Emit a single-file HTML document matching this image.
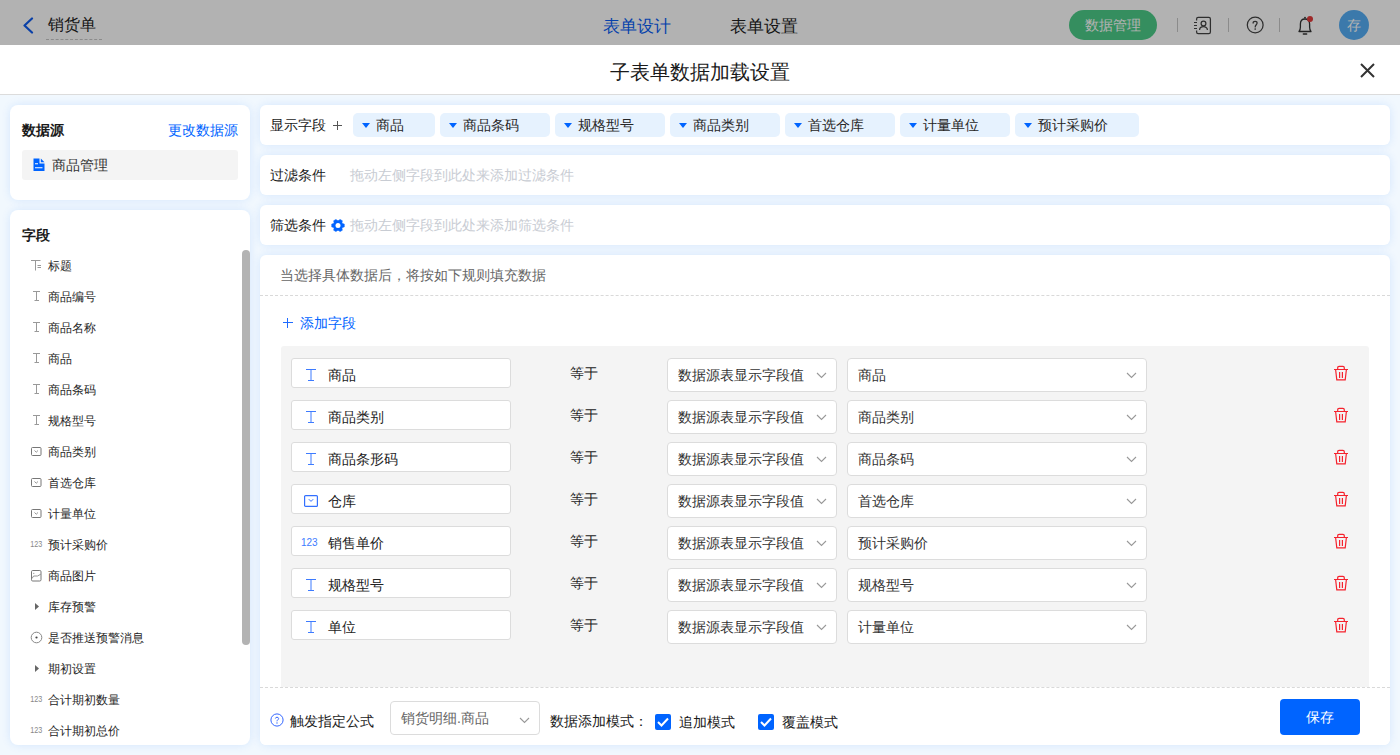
<!DOCTYPE html>
<html><head><meta charset="utf-8">
<style>
*{box-sizing:border-box;margin:0;padding:0}
html,body{width:1400px;height:755px;overflow:hidden;background:#fff;font-family:"Liberation Sans",sans-serif;color:#333}
.abs{position:absolute}
.t{position:absolute;white-space:nowrap;line-height:1}
/* header */
#hdr{position:absolute;left:0;top:0;width:1400px;height:45px;background:#fff}
#ovl{position:absolute;left:0;top:0;width:1400px;height:45px;background:rgba(0,0,0,0.3)}
/* modal */
#mh{position:absolute;left:0;top:45px;width:1400px;height:50px;background:#fff;border-bottom:1px solid #dcdcdc}
#mb{position:absolute;left:0;top:95px;width:1400px;height:660px;background:#f1f8fe}
.card{position:absolute;background:#fff;border-radius:8px;box-shadow:0 0 10px rgba(0,110,245,0.12)}
.chip{position:absolute;top:8px;height:24px;background:#e6f2fe;border-radius:5px;font-size:14px}
.chip .tri{position:absolute;left:9px;top:10px;width:0;height:0;border-left:4px solid transparent;border-right:4px solid transparent;border-top:5px solid #0064ff}
.chip span{position:absolute;left:23px;top:5px;line-height:14px;color:#262626}
.fi{position:absolute;left:28px;height:31px;width:200px;font-size:12px;color:#262626}
.fi span{position:absolute;left:10px;top:9px;line-height:12px}
.fi svg{position:absolute;left:-8px;top:8px}
.row{position:absolute;left:10px;width:1068px;height:42px}
.inp{position:absolute;left:0;top:0;width:220px;height:30px;background:#fff;border:1px solid #dcdcdc;border-radius:3px;font-size:14px}
.inp span{position:absolute;left:36px;top:9px;line-height:14px;color:#222}
.inp svg{position:absolute;left:11px;top:8px}
.eq{position:absolute;left:279px;top:8px;font-size:14px;line-height:14px;color:#222}
.sel{position:absolute;top:0;height:34px;background:#fff;border:1px solid #dcdcdc;border-radius:4px;font-size:14px}
.sel span{position:absolute;left:10px;top:9px;line-height:14px;color:#333}
.sel svg{position:absolute;top:13px}
.trash{position:absolute;left:1042px;top:7px}
</style></head><body>
<div id="hdr">
  <svg class="abs" style="left:22px;top:17px" width="12" height="17" viewBox="0 0 12 17"><path d="M10 1.5 L2.5 8.5 L10 15.5" fill="none" stroke="#0f5cf0" stroke-width="2.2" stroke-linecap="round" stroke-linejoin="round"/></svg>
  <div class="t" style="left:48px;top:17px;font-size:16px;color:#222">销货单</div>
  <div class="abs" style="left:46px;top:39px;width:56px;height:0;border-top:1px dashed #c8c8c8"></div>
  <div class="t" style="left:603px;top:18px;font-size:17px;color:#0a5ff5">表单设计</div>
  <div class="t" style="left:730px;top:18px;font-size:17px;color:#222">表单设置</div>
  <div class="abs" style="left:1069px;top:10px;width:88px;height:30px;border-radius:15px;background:#4ccc89"></div>
  <div class="t" style="left:1085px;top:18px;font-size:14px;color:#fff">数据管理</div>
  <div class="abs" style="left:1177px;top:18px;width:1px;height:14px;background:#c8c8c8"></div>
  <svg class="abs" style="left:1193px;top:16px" width="20" height="20" viewBox="0 0 20 20"><path d="M3.6 4.5 V3 Q3.6 1.4 5.2 1.4 H15.8 Q17.4 1.4 17.4 3 V16 Q17.4 17.6 15.8 17.6 H5.2 Q3.6 17.6 3.6 16 V14.5" fill="none" stroke="#444" stroke-width="1.25"/><circle cx="10.5" cy="7.4" r="2.4" fill="none" stroke="#444" stroke-width="1.25"/><path d="M6.6 14 C6.6 9.6 14.4 9.6 14.4 14" fill="none" stroke="#444" stroke-width="1.25"/><path d="M1 6.5h3M1 9.5h3M1 12.5h3" stroke="#444" stroke-width="1.1"/></svg>
  <div class="abs" style="left:1228px;top:18px;width:1px;height:14px;background:#c8c8c8"></div>
  <svg class="abs" style="left:1245px;top:15.4px" width="20" height="20" viewBox="0 0 20 20"><circle cx="10.2" cy="10" r="7.9" fill="none" stroke="#444" stroke-width="1.25"/><path d="M8.1 8.1 C8.1 5.7 12.1 5.7 12.1 8.1 C12.1 9.7 10.2 9.8 10.2 11.9" fill="none" stroke="#444" stroke-width="1.25" stroke-linecap="round"/><circle cx="10.2" cy="14" r="0.85" fill="#444"/></svg>
  <div class="abs" style="left:1279px;top:18px;width:1px;height:14px;background:#c8c8c8"></div>
  <svg class="abs" style="left:1296px;top:15px" width="20" height="21" viewBox="0 0 20 21"><path d="M3 16.5 C4 15.5 4.4 14 4.4 12 V9 C4.4 6 6.3 4 9 4 C11.7 4 13.6 6 13.6 9 V12 C13.6 14 14 15.5 15 16.5 Z" fill="none" stroke="#333" stroke-width="1.3" stroke-linejoin="round"/><path d="M7.3 19 H10.7" stroke="#333" stroke-width="1.3" stroke-linecap="round"/><circle cx="9" cy="2.6" r="0.9" fill="#333"/><circle cx="14" cy="4" r="3" fill="#e23b3b"/></svg>
  <div class="abs" style="left:1339px;top:10px;width:30px;height:30px;border-radius:50%;background:#55aef5"></div>
  <div class="t" style="left:1347px;top:18px;font-size:14px;color:#fff">存</div>
</div>
<div id="ovl"></div>

<div id="mh">
  <div class="t" style="left:610px;top:17px;font-size:20px;color:#1a1a1a">子表单数据加载设置</div>
  <svg class="abs" style="left:1359px;top:17px" width="17" height="17" viewBox="0 0 17 17"><path d="M2 2 L15 15 M15 2 L2 15" stroke="#333" stroke-width="2"/></svg>
</div>

<div id="mb">
  <!-- left top card -->
  <div class="card" style="left:10px;top:10px;width:240px;height:95px">
    <div class="t" style="left:12px;top:18px;font-size:14px;font-weight:bold;color:#1a1a1a">数据源</div>
    <div class="t" style="left:158px;top:18px;font-size:14px;color:#0064ff">更改数据源</div>
    <div class="abs" style="left:12px;top:45px;width:216px;height:30px;background:#f4f4f4;border-radius:3px"></div>
    <svg class="abs" style="left:23px;top:53px" width="12" height="13" viewBox="0 0 12 13"><path d="M0.5 0.5 H6.5 V5.5 H11.5 V13 H0.5 Z" fill="#0064ff"/><path d="M7.8 0.5 L11.5 4.2 H7.8 Z" fill="#0064ff"/><path d="M2 5.7 H5 M2 9.7 H9.5" stroke="#fff" stroke-width="1.1"/></svg>
    <div class="t" style="left:42px;top:53px;font-size:14px;color:#333">商品管理</div>
  </div>
  <!-- left fields card -->
  <div class="card" style="left:10px;top:115px;width:240px;height:535px;overflow:hidden">
    <div class="t" style="left:12px;top:18px;font-size:14px;font-weight:bold;color:#1a1a1a">字段</div>
    <div class="abs" style="left:232px;top:40px;width:8px;height:395px;border-radius:4px;background:#b3b3b3"></div>
  </div>
  <div id="fields" class="abs" style="left:10px;top:156px;width:232px;height:495px;overflow:hidden">
<div class="fi" style="top:0px"><svg width="13" height="13" viewBox="0 0 13 13"><path d="M1 1.5 H10.5 M5.5 1.5 V11.5" stroke="#999" stroke-width="1"/><path d="M7.5 6.5 H11 M7.5 8.5 H11" stroke="#999" stroke-width="1"/></svg><span>标题</span></div>
<div class="fi" style="top:31px"><svg width="13" height="13" viewBox="0 0 13 13"><path d="M3 1.5 H10 M6.5 1.5 V10.5 M4.5 10.5 H9" stroke="#999" stroke-width="1"/></svg><span>商品编号</span></div>
<div class="fi" style="top:62px"><svg width="13" height="13" viewBox="0 0 13 13"><path d="M3 1.5 H10 M6.5 1.5 V10.5 M4.5 10.5 H9" stroke="#999" stroke-width="1"/></svg><span>商品名称</span></div>
<div class="fi" style="top:93px"><svg width="13" height="13" viewBox="0 0 13 13"><path d="M3 1.5 H10 M6.5 1.5 V10.5 M4.5 10.5 H9" stroke="#999" stroke-width="1"/></svg><span>商品</span></div>
<div class="fi" style="top:124px"><svg width="13" height="13" viewBox="0 0 13 13"><path d="M3 1.5 H10 M6.5 1.5 V10.5 M4.5 10.5 H9" stroke="#999" stroke-width="1"/></svg><span>商品条码</span></div>
<div class="fi" style="top:155px"><svg width="13" height="13" viewBox="0 0 13 13"><path d="M3 1.5 H10 M6.5 1.5 V10.5 M4.5 10.5 H9" stroke="#999" stroke-width="1"/></svg><span>规格型号</span></div>
<div class="fi" style="top:186px"><svg width="13" height="13" viewBox="0 0 13 13"><rect x="1.5" y="2.5" width="9.5" height="8" rx="1" fill="none" stroke="#777" stroke-width="1"/><path d="M4.5 5.5 L6.25 7.2 L8 5.5" fill="none" stroke="#888" stroke-width="0.9"/></svg><span>商品类别</span></div>
<div class="fi" style="top:217px"><svg width="13" height="13" viewBox="0 0 13 13"><rect x="1.5" y="2.5" width="9.5" height="8" rx="1" fill="none" stroke="#777" stroke-width="1"/><path d="M4.5 5.5 L6.25 7.2 L8 5.5" fill="none" stroke="#888" stroke-width="0.9"/></svg><span>首选仓库</span></div>
<div class="fi" style="top:248px"><svg width="13" height="13" viewBox="0 0 13 13"><rect x="1.5" y="2.5" width="9.5" height="8" rx="1" fill="none" stroke="#777" stroke-width="1"/><path d="M4.5 5.5 L6.25 7.2 L8 5.5" fill="none" stroke="#888" stroke-width="0.9"/></svg><span>计量单位</span></div>
<div class="fi" style="top:279px"><svg width="15" height="13" viewBox="0 0 15 13"><text x="0.3" y="8.8" font-family="Liberation Sans" font-size="9" textLength="12" lengthAdjust="spacingAndGlyphs" fill="#888">123</text></svg><span>预计采购价</span></div>
<div class="fi" style="top:310px"><svg width="13" height="13" viewBox="0 0 13 13"><rect x="1.5" y="1.5" width="9.5" height="10.5" rx="1.2" fill="none" stroke="#777" stroke-width="1"/><path d="M2 9.5 L3.6 7 H7.5 L10.8 5.2" fill="none" stroke="#888" stroke-width="0.9"/><circle cx="3.8" cy="4.3" r="0.6" fill="#888"/></svg><span>商品图片</span></div>
<div class="fi" style="top:341px"><svg width="13" height="13" viewBox="0 0 13 13"><path d="M5 3 L9 6.5 L5 10 Z" fill="#666"/></svg><span>库存预警</span></div>
<div class="fi" style="top:372px"><svg width="13" height="13" viewBox="0 0 13 13"><circle cx="6.5" cy="6.5" r="5.3" fill="none" stroke="#888" stroke-width="1"/><circle cx="6.5" cy="6.5" r="1.1" fill="#444"/></svg><span>是否推送预警消息</span></div>
<div class="fi" style="top:403px"><svg width="13" height="13" viewBox="0 0 13 13"><path d="M5 3 L9 6.5 L5 10 Z" fill="#666"/></svg><span>期初设置</span></div>
<div class="fi" style="top:434px"><svg width="15" height="13" viewBox="0 0 15 13"><text x="0.3" y="8.8" font-family="Liberation Sans" font-size="9" textLength="12" lengthAdjust="spacingAndGlyphs" fill="#888">123</text></svg><span>合计期初数量</span></div>
<div class="fi" style="top:465px"><svg width="15" height="13" viewBox="0 0 15 13"><text x="0.3" y="8.8" font-family="Liberation Sans" font-size="9" textLength="12" lengthAdjust="spacingAndGlyphs" fill="#888">123</text></svg><span>合计期初总价</span></div>
</div>

  <!-- right rows -->
  <div class="card" style="left:260px;top:10px;width:1130px;height:40px;border-radius:6px">
    <div class="t" style="left:10px;top:13px;font-size:14px;color:#1a1a1a">显示字段</div>
    <svg class="abs" style="left:73px;top:16px" width="9" height="9" viewBox="0 0 9 9"><path d="M4.5 0 V9 M0 4.5 H9" stroke="#555" stroke-width="1"/></svg>
    <div class="chip" style="left:93px;width:82px"><i class="tri"></i><span>商品</span></div>
    <div class="chip" style="left:180px;width:110px"><i class="tri"></i><span>商品条码</span></div>
    <div class="chip" style="left:295px;width:110px"><i class="tri"></i><span>规格型号</span></div>
    <div class="chip" style="left:410px;width:110px"><i class="tri"></i><span>商品类别</span></div>
    <div class="chip" style="left:525px;width:110px"><i class="tri"></i><span>首选仓库</span></div>
    <div class="chip" style="left:640px;width:110px"><i class="tri"></i><span>计量单位</span></div>
    <div class="chip" style="left:755px;width:124px"><i class="tri"></i><span>预计采购价</span></div>
  </div>
  <div class="card" style="left:260px;top:60px;width:1130px;height:40px;border-radius:6px">
    <div class="t" style="left:10px;top:13px;font-size:14px;color:#1a1a1a">过滤条件</div>
    <div class="t" style="left:90px;top:13px;font-size:14px;color:#c8ccd3">拖动左侧字段到此处来添加过滤条件</div>
  </div>
  <div class="card" style="left:260px;top:110px;width:1130px;height:40px;border-radius:6px">
    <div class="t" style="left:10px;top:13px;font-size:14px;color:#1a1a1a">筛选条件</div>
    <svg class="abs" style="left:71px;top:13.5px" width="14" height="13" viewBox="0 0 14 13"><path d="M11.67 4.71 L13.24 5.06 L13.24 7.94 L11.67 8.29 L10.89 9.65 L11.36 11.18 L8.87 12.62 L7.78 11.44 L6.22 11.44 L5.13 12.62 L2.64 11.18 L3.11 9.65 L2.33 8.29 L0.76 7.94 L0.76 5.06 L2.33 4.71 L3.11 3.35 L2.64 1.82 L5.13 0.38 L6.22 1.56 L7.78 1.56 L8.87 0.38 L11.36 1.82 L10.89 3.35 Z" fill="#0064ff" stroke="#0064ff" stroke-width="0.6" stroke-linejoin="round"/><circle cx="7" cy="6.5" r="2.5" fill="#fff"/></svg>
    <div class="t" style="left:90px;top:13px;font-size:14px;color:#c8ccd3">拖动左侧字段到此处来添加筛选条件</div>
  </div>
  <div class="card" style="left:260px;top:160px;width:1130px;height:490px;border-radius:6px;overflow:hidden">
    <div class="t" style="left:20px;top:13px;font-size:14px;color:#666">当选择具体数据后，将按如下规则填充数据</div>
    <div class="abs" style="left:0;top:40px;width:1130px;height:0;border-top:1px dashed #d9d9d9"></div>
    <svg class="abs" style="left:23px;top:63px" width="10" height="10" viewBox="0 0 10 10"><path d="M4.5 0 V10 M0 4.5 H10" stroke="#1f6bff" stroke-width="1"/></svg>
    <div class="t" style="left:40px;top:61px;font-size:14px;color:#0064ff">添加字段</div>
    <div id="grid" class="abs" style="left:21px;top:91px;width:1088px;height:350px;background:#f4f4f4;border-radius:3px">
<div class="row" style="top:12px"><div class="inp"><svg style="left:13px;top:9px" width="12" height="14" viewBox="0 0 12 14"><path d="M1 1.5 H11 M6 1.5 V12.5 M3 12.5 H9" stroke="#3d7bff" stroke-width="1"/></svg><span>商品</span></div><div class="eq">等于</div><div class="sel" style="left:376px;width:170px"><span>数据源表显示字段值</span><svg style="left:148px" width="11" height="7" viewBox="0 0 11 7"><path d="M1 1 L5.5 5.5 L10 1" fill="none" stroke="#999" stroke-width="1.1"/></svg></div><div class="sel" style="left:556px;width:300px"><span>商品</span><svg style="left:278px" width="11" height="7" viewBox="0 0 11 7"><path d="M1 1 L5.5 5.5 L10 1" fill="none" stroke="#999" stroke-width="1.1"/></svg></div><div class="trash"><svg width="16" height="17" viewBox="0 0 16 17"><path d="M1 4.5 H15 M4.7 4.5 V2.7 C4.7 1.8 5.2 1.4 6.1 1.4 H9.9 C10.8 1.4 11.3 1.8 11.3 2.7 V4.5 M2.6 4.5 L3.8 14.9 H12.2 L13.4 4.5 M6.6 7 V13 M9.4 7 V13" fill="none" stroke="#f5222d" stroke-width="1.2"/></svg></div></div>
<div class="row" style="top:54px"><div class="inp"><svg style="left:13px;top:9px" width="12" height="14" viewBox="0 0 12 14"><path d="M1 1.5 H11 M6 1.5 V12.5 M3 12.5 H9" stroke="#3d7bff" stroke-width="1"/></svg><span>商品类别</span></div><div class="eq">等于</div><div class="sel" style="left:376px;width:170px"><span>数据源表显示字段值</span><svg style="left:148px" width="11" height="7" viewBox="0 0 11 7"><path d="M1 1 L5.5 5.5 L10 1" fill="none" stroke="#999" stroke-width="1.1"/></svg></div><div class="sel" style="left:556px;width:300px"><span>商品类别</span><svg style="left:278px" width="11" height="7" viewBox="0 0 11 7"><path d="M1 1 L5.5 5.5 L10 1" fill="none" stroke="#999" stroke-width="1.1"/></svg></div><div class="trash"><svg width="16" height="17" viewBox="0 0 16 17"><path d="M1 4.5 H15 M4.7 4.5 V2.7 C4.7 1.8 5.2 1.4 6.1 1.4 H9.9 C10.8 1.4 11.3 1.8 11.3 2.7 V4.5 M2.6 4.5 L3.8 14.9 H12.2 L13.4 4.5 M6.6 7 V13 M9.4 7 V13" fill="none" stroke="#f5222d" stroke-width="1.2"/></svg></div></div>
<div class="row" style="top:96px"><div class="inp"><svg style="left:13px;top:9px" width="12" height="14" viewBox="0 0 12 14"><path d="M1 1.5 H11 M6 1.5 V12.5 M3 12.5 H9" stroke="#3d7bff" stroke-width="1"/></svg><span>商品条形码</span></div><div class="eq">等于</div><div class="sel" style="left:376px;width:170px"><span>数据源表显示字段值</span><svg style="left:148px" width="11" height="7" viewBox="0 0 11 7"><path d="M1 1 L5.5 5.5 L10 1" fill="none" stroke="#999" stroke-width="1.1"/></svg></div><div class="sel" style="left:556px;width:300px"><span>商品条码</span><svg style="left:278px" width="11" height="7" viewBox="0 0 11 7"><path d="M1 1 L5.5 5.5 L10 1" fill="none" stroke="#999" stroke-width="1.1"/></svg></div><div class="trash"><svg width="16" height="17" viewBox="0 0 16 17"><path d="M1 4.5 H15 M4.7 4.5 V2.7 C4.7 1.8 5.2 1.4 6.1 1.4 H9.9 C10.8 1.4 11.3 1.8 11.3 2.7 V4.5 M2.6 4.5 L3.8 14.9 H12.2 L13.4 4.5 M6.6 7 V13 M9.4 7 V13" fill="none" stroke="#f5222d" stroke-width="1.2"/></svg></div></div>
<div class="row" style="top:138px"><div class="inp"><svg style="left:11px;top:9px" width="16" height="14" viewBox="0 0 16 14"><rect x="1.6" y="1.6" width="12.8" height="10.8" rx="1" fill="none" stroke="#3370ff" stroke-width="1.2"/><path d="M5.8 5.2 L8 7.4 L10.2 5.2" fill="none" stroke="#3370ff" stroke-width="1"/></svg><span>仓库</span></div><div class="eq">等于</div><div class="sel" style="left:376px;width:170px"><span>数据源表显示字段值</span><svg style="left:148px" width="11" height="7" viewBox="0 0 11 7"><path d="M1 1 L5.5 5.5 L10 1" fill="none" stroke="#999" stroke-width="1.1"/></svg></div><div class="sel" style="left:556px;width:300px"><span>首选仓库</span><svg style="left:278px" width="11" height="7" viewBox="0 0 11 7"><path d="M1 1 L5.5 5.5 L10 1" fill="none" stroke="#999" stroke-width="1.1"/></svg></div><div class="trash"><svg width="16" height="17" viewBox="0 0 16 17"><path d="M1 4.5 H15 M4.7 4.5 V2.7 C4.7 1.8 5.2 1.4 6.1 1.4 H9.9 C10.8 1.4 11.3 1.8 11.3 2.7 V4.5 M2.6 4.5 L3.8 14.9 H12.2 L13.4 4.5 M6.6 7 V13 M9.4 7 V13" fill="none" stroke="#f5222d" stroke-width="1.2"/></svg></div></div>
<div class="row" style="top:180px"><div class="inp"><svg style="left:9px;top:9px" width="18" height="14" viewBox="0 0 18 14"><text x="0" y="10" font-family="Liberation Sans" font-size="10" fill="#3d7bff">123</text></svg><span>销售单价</span></div><div class="eq">等于</div><div class="sel" style="left:376px;width:170px"><span>数据源表显示字段值</span><svg style="left:148px" width="11" height="7" viewBox="0 0 11 7"><path d="M1 1 L5.5 5.5 L10 1" fill="none" stroke="#999" stroke-width="1.1"/></svg></div><div class="sel" style="left:556px;width:300px"><span>预计采购价</span><svg style="left:278px" width="11" height="7" viewBox="0 0 11 7"><path d="M1 1 L5.5 5.5 L10 1" fill="none" stroke="#999" stroke-width="1.1"/></svg></div><div class="trash"><svg width="16" height="17" viewBox="0 0 16 17"><path d="M1 4.5 H15 M4.7 4.5 V2.7 C4.7 1.8 5.2 1.4 6.1 1.4 H9.9 C10.8 1.4 11.3 1.8 11.3 2.7 V4.5 M2.6 4.5 L3.8 14.9 H12.2 L13.4 4.5 M6.6 7 V13 M9.4 7 V13" fill="none" stroke="#f5222d" stroke-width="1.2"/></svg></div></div>
<div class="row" style="top:222px"><div class="inp"><svg style="left:13px;top:9px" width="12" height="14" viewBox="0 0 12 14"><path d="M1 1.5 H11 M6 1.5 V12.5 M3 12.5 H9" stroke="#3d7bff" stroke-width="1"/></svg><span>规格型号</span></div><div class="eq">等于</div><div class="sel" style="left:376px;width:170px"><span>数据源表显示字段值</span><svg style="left:148px" width="11" height="7" viewBox="0 0 11 7"><path d="M1 1 L5.5 5.5 L10 1" fill="none" stroke="#999" stroke-width="1.1"/></svg></div><div class="sel" style="left:556px;width:300px"><span>规格型号</span><svg style="left:278px" width="11" height="7" viewBox="0 0 11 7"><path d="M1 1 L5.5 5.5 L10 1" fill="none" stroke="#999" stroke-width="1.1"/></svg></div><div class="trash"><svg width="16" height="17" viewBox="0 0 16 17"><path d="M1 4.5 H15 M4.7 4.5 V2.7 C4.7 1.8 5.2 1.4 6.1 1.4 H9.9 C10.8 1.4 11.3 1.8 11.3 2.7 V4.5 M2.6 4.5 L3.8 14.9 H12.2 L13.4 4.5 M6.6 7 V13 M9.4 7 V13" fill="none" stroke="#f5222d" stroke-width="1.2"/></svg></div></div>
<div class="row" style="top:264px"><div class="inp"><svg style="left:13px;top:9px" width="12" height="14" viewBox="0 0 12 14"><path d="M1 1.5 H11 M6 1.5 V12.5 M3 12.5 H9" stroke="#3d7bff" stroke-width="1"/></svg><span>单位</span></div><div class="eq">等于</div><div class="sel" style="left:376px;width:170px"><span>数据源表显示字段值</span><svg style="left:148px" width="11" height="7" viewBox="0 0 11 7"><path d="M1 1 L5.5 5.5 L10 1" fill="none" stroke="#999" stroke-width="1.1"/></svg></div><div class="sel" style="left:556px;width:300px"><span>计量单位</span><svg style="left:278px" width="11" height="7" viewBox="0 0 11 7"><path d="M1 1 L5.5 5.5 L10 1" fill="none" stroke="#999" stroke-width="1.1"/></svg></div><div class="trash"><svg width="16" height="17" viewBox="0 0 16 17"><path d="M1 4.5 H15 M4.7 4.5 V2.7 C4.7 1.8 5.2 1.4 6.1 1.4 H9.9 C10.8 1.4 11.3 1.8 11.3 2.7 V4.5 M2.6 4.5 L3.8 14.9 H12.2 L13.4 4.5 M6.6 7 V13 M9.4 7 V13" fill="none" stroke="#f5222d" stroke-width="1.2"/></svg></div></div>
</div>
    <div class="abs" style="left:0;top:432px;width:1130px;height:58px;background:#fff;border-top:1px dashed #d9d9d9">
      <svg class="abs" style="left:10px;top:25px" width="14" height="14" viewBox="0 0 14 14"><circle cx="7" cy="7" r="6.1" fill="none" stroke="#3366ff" stroke-width="1"/><path d="M5.4 5.5 C5.4 3.8 8.6 3.8 8.6 5.5 C8.6 6.8 7 6.9 7 8.3" fill="none" stroke="#3366ff" stroke-width="1"/><circle cx="7" cy="10" r="0.65" fill="#3366ff"/></svg>
      <div class="t" style="left:30px;top:26px;font-size:14px;color:#1a1a1a">触发指定公式</div>
      <div class="sel" style="left:130px;top:13px;width:150px"><span style="color:#666">销货明细.商品</span><svg style="left:128px;top:15px" width="11" height="7" viewBox="0 0 11 7"><path d="M1 1 L5.5 5.5 L10 1" fill="none" stroke="#999" stroke-width="1.1"/></svg></div>
      <div class="t" style="left:290px;top:26px;font-size:14px;color:#1a1a1a">数据添加模式：</div>
      <div class="abs" style="left:395px;top:26px;width:16px;height:16px;background:#0064ff;border-radius:2px"></div>
      <svg class="abs" style="left:395px;top:26px" width="16" height="16" viewBox="0 0 16 16"><path d="M3 8 L6.5 11.5 L13 4.5" fill="none" stroke="#fff" stroke-width="2"/></svg>
      <div class="t" style="left:419px;top:27px;font-size:14px;color:#1a1a1a">追加模式</div>
      <div class="abs" style="left:498px;top:26px;width:16px;height:16px;background:#0064ff;border-radius:2px"></div>
      <svg class="abs" style="left:498px;top:26px" width="16" height="16" viewBox="0 0 16 16"><path d="M3 8 L6.5 11.5 L13 4.5" fill="none" stroke="#fff" stroke-width="2"/></svg>
      <div class="t" style="left:522px;top:27px;font-size:14px;color:#1a1a1a">覆盖模式</div>
      <div class="abs" style="left:1020px;top:11px;width:80px;height:36px;background:#0064ff;border-radius:4px"></div>
      <div class="t" style="left:1046px;top:22px;font-size:14px;color:#fff">保存</div>
    </div>
  </div>
</div>
</body></html>
